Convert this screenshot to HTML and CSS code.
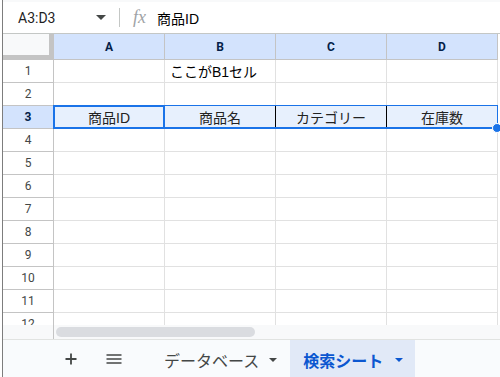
FILE: index.html
```html
<html>
  <head>
    <link rel="stylesheet" href="styles.css">
  </head>
  <body>
    <div class="app">
      <header class="formula-bar">
        <div class="name-box">
          <span class="name-text">A3:D3</span>
          <span class="caret"></span>
        </div>
        <div class="bar-divider"></div>
        <span class="fx">fx</span>
        <span class="formula-text">商品ID</span>
      </header>

      <main class="sheet">
        <div class="row head-row">
          <div class="corner"></div>
          <div class="col-head">A</div>
          <div class="col-head">B</div>
          <div class="col-head">C</div>
          <div class="col-head">D</div>
        </div>
        <div class="row">
          <div class="row-head">1</div>
          <div class="cell"></div>
          <div class="cell">ここがB1セル</div>
          <div class="cell"></div>
          <div class="cell"></div>
        </div>
        <div class="row">
          <div class="row-head">2</div>
          <div class="cell"></div>
          <div class="cell"></div>
          <div class="cell"></div>
          <div class="cell"></div>
        </div>
        <div class="row selected-row">
          <div class="row-head">3</div>
          <div class="cell center">商品ID</div>
          <div class="cell center boxed">商品名</div>
          <div class="cell center boxed">カテゴリー</div>
          <div class="cell center">在庫数</div>
        </div>
        <div class="row">
          <div class="row-head">4</div>
          <div class="cell"></div><div class="cell"></div><div class="cell"></div><div class="cell"></div>
        </div>
        <div class="row">
          <div class="row-head">5</div>
          <div class="cell"></div><div class="cell"></div><div class="cell"></div><div class="cell"></div>
        </div>
        <div class="row">
          <div class="row-head">6</div>
          <div class="cell"></div><div class="cell"></div><div class="cell"></div><div class="cell"></div>
        </div>
        <div class="row">
          <div class="row-head">7</div>
          <div class="cell"></div><div class="cell"></div><div class="cell"></div><div class="cell"></div>
        </div>
        <div class="row">
          <div class="row-head">8</div>
          <div class="cell"></div><div class="cell"></div><div class="cell"></div><div class="cell"></div>
        </div>
        <div class="row">
          <div class="row-head">9</div>
          <div class="cell"></div><div class="cell"></div><div class="cell"></div><div class="cell"></div>
        </div>
        <div class="row">
          <div class="row-head">10</div>
          <div class="cell"></div><div class="cell"></div><div class="cell"></div><div class="cell"></div>
        </div>
        <div class="row">
          <div class="row-head">11</div>
          <div class="cell"></div><div class="cell"></div><div class="cell"></div><div class="cell"></div>
        </div>
        <div class="row">
          <div class="row-head">12</div>
          <div class="cell"></div><div class="cell"></div><div class="cell"></div><div class="cell"></div>
        </div>

        <!-- selection overlays -->
        <div class="range-box"></div>
        <div class="active-box"></div>
        <div class="fill-handle"></div>
      </main>

      <div class="hscroll">
        <div class="hscroll-gutter"></div>
        <div class="hscroll-thumb"></div>
      </div>

      <footer class="tab-bar">
        <button class="icon-btn">
          <svg width="12" height="12" viewBox="0 0 12 12"><path d="M6 0.5v11M0.5 6h11" stroke="#444746" stroke-width="1.8" fill="none"/></svg>
        </button>
        <button class="icon-btn">
          <svg width="16" height="10" viewBox="0 0 16 10"><path d="M0.5 1h15M0.5 5h15M0.5 9h15" stroke="#444746" stroke-width="1.5" fill="none"/></svg>
        </button>
        <div class="tab">
          <span class="tab-name">データベース</span>
          <span class="tab-caret"></span>
        </div>
        <div class="tab active">
          <span class="tab-name">検索シート</span>
          <span class="tab-caret"></span>
        </div>
      </footer>
    </div>
  </body>
</html>
```

FILE: styles.css
```css
html, body {
  margin: 0;
  background: #fff;
}
.app {
  margin-left: 2px;
  border-left: 1px solid #7d7d7d;
  height: 377px;
  overflow: hidden;
  font-family: Roboto, "Noto Sans CJK JP", sans-serif;
  color: #1f1f1f;
}

/* Formula bar */
.formula-bar {
  display: flex;
  align-items: center;
  height: 31px;
  border-top: 2px solid #f8f9fa;
  border-bottom: 1px solid #c4c7c5;
  background: #fff;
}
.name-box {
  display: flex;
  align-items: center;
  width: 100px;
  padding-left: 15px;
  font-size: 14px;
}
.name-text {
  flex: 1;
}
.caret {
  width: 0;
  height: 0;
  border-left: 5px solid transparent;
  border-right: 5px solid transparent;
  border-top: 5px solid #444746;
  margin-right: 12px;
}
.bar-divider {
  width: 1px;
  height: 19px;
  background: #c4c7c5;
  margin-left: 1px;
}
.fx {
  font-family: "Liberation Serif", "DejaVu Serif", serif;
  font-style: italic;
  font-size: 18px;
  color: #a0a3a6;
  margin-left: 13px;
  width: 24px;
}
.formula-text {
  font-family: "Liberation Sans", "Noto Sans CJK JP", sans-serif;
  font-size: 14px;
  color: #000;
}

/* Grid */
.sheet {
  position: relative;
  height: 291px;
  overflow: hidden;
}
.row {
  display: grid;
  grid-template-columns: 51px repeat(4, 111px);
  height: 23px;
}
.head-row {
  height: 26px;
}
.corner {
  box-sizing: border-box;
  background: #f8f9fa;
  border-right: 5px solid #c4c4c4;
  border-bottom: 5px solid #c4c4c4;
}
.col-head {
  box-sizing: border-box;
  display: flex;
  align-items: center;
  justify-content: center;
  background: #d3e3fd;
  border-right: 1px solid #c4c4c4;
  border-bottom: 1px solid #c4c4c4;
  font-size: 12px;
  font-weight: 700;
  color: #041e49;
}
.row-head {
  box-sizing: border-box;
  display: flex;
  align-items: center;
  justify-content: center;
  background: #fff;
  border-right: 1px solid #c4c4c4;
  border-bottom: 1px solid #c4c4c4;
  font-size: 12px;
  color: #444746;
}
.cell {
  box-sizing: border-box;
  display: flex;
  align-items: center;
  padding: 0 5px;
  border-right: 1px solid #e1e1e1;
  border-bottom: 1px solid #e1e1e1;
  font-family: "Liberation Sans", "Noto Sans CJK JP", sans-serif;
  font-size: 14px;
  color: #000;
  white-space: nowrap;
}
.cell.center {
  justify-content: center;
  color: #222;
}
.selected-row .row-head {
  background: #d3e3fd;
  font-weight: 700;
  color: #041e49;
}
.selected-row .cell {
  background: #e7f0fd;
}
.selected-row .boxed {
  border-right-color: #000;
}

/* Selection overlays */
.range-box {
  position: absolute;
  left: 50px;
  top: 71px;
  width: 445px;
  height: 24px;
  box-sizing: border-box;
  border: 1px solid #1a73e8;
  border-bottom-width: 2px;
}
.active-box {
  position: absolute;
  left: 50px;
  top: 71px;
  width: 112px;
  height: 24px;
  box-sizing: border-box;
  border: 2px solid #1a73e8;
}
.fill-handle {
  position: absolute;
  left: 489px;
  top: 89px;
  width: 8px;
  height: 8px;
  border: 1px solid #fff;
  border-radius: 50%;
  background: #1a73e8;
}

/* Horizontal scroll strip */
.hscroll {
  display: flex;
  height: 14px;
  background: #f8f9fa;
  border-bottom: 1px solid #e1e3e1;
}
.hscroll-gutter {
  width: 50px;
  border-right: 1px solid #c4c4c4;
}
.hscroll-thumb {
  width: 199px;
  height: 10px;
  margin: 2px 0 0 2px;
  border-radius: 5px;
  background: #dadce0;
}

/* Sheet tabs */
.tab-bar {
  display: flex;
  align-items: stretch;
  height: 37px;
  padding-left: 48px;
  background: #f9fbfd;
}
.icon-btn {
  width: 40px;
  padding: 0;
  margin-right: 3px;
  border: none;
  background: none;
  display: flex;
  align-items: center;
  justify-content: center;
}
.icon-btn + .icon-btn {
  margin-right: 16px;
}
.tab {
  display: flex;
  align-items: center;
  padding: 3px 13px 0 14px;
  font-size: 16px;
  color: #444746;
}
.tab-name {
  margin-right: 10px;
}
.tab-caret {
  width: 0;
  height: 0;
  border-left: 4.5px solid transparent;
  border-right: 4.5px solid transparent;
  border-top: 4.5px solid #444746;
}
.tab.active {
  padding: 3px 12px 0 13px;
  background: #e1e9f7;
  color: #0b57d0;
  font-weight: 700;
}
.tab.active .tab-name {
  margin-right: 12px;
}
.tab.active .tab-caret {
  border-top-color: #0b57d0;
}
```
